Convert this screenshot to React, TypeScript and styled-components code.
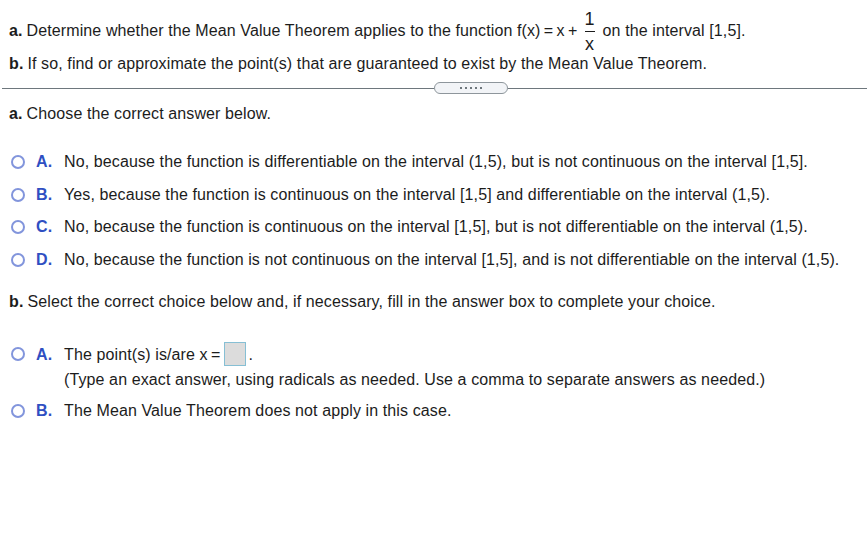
import React from "react";
import styled, { createGlobalStyle } from "styled-components";

const Global = createGlobalStyle`
  html, body { margin: 0; padding: 0; background: #fff; }
  body { font-family: "Liberation Sans", Arial, sans-serif; font-size: 16px; letter-spacing: 0.11px; color: #1c1c1c; }
`;

const Page = styled.div`
  width: 867px;
  height: 542px;
  overflow: hidden;
  padding: 9px 0 0 9px;
  box-sizing: border-box;
`;

const QLine = styled.div<{ h: number }>`
  display: flex;
  align-items: center;
  height: ${(p) => p.h}px;
  white-space: pre;
`;

const Bold = styled.b`
  font-weight: bold;
  margin-right: 4px;
`;

const Frac = styled.span`
  display: inline-flex;
  flex-direction: column;
  align-items: center;
  margin: 0 8px 0 7px;
  font-size: 18px;
  line-height: 16px;
`;

const FracBar = styled.span`
  display: block;
  width: 10px;
  height: 1px;
  background: #1c1c1c;
  margin: 4px 0 4px;
`;

const Divider = styled.div`
  display: flex;
  align-items: center;
  margin: 7px 0 0 -7px;
  height: 12px;
`;

const Rule = styled.div<{ grow: number }>`
  flex: ${(p) => p.grow};
  height: 1px;
  background: #6e777d;
`;

const Pill = styled.div`
  width: 72px;
  height: 10px;
  border: 1px solid #8e969c;
  border-radius: 6px;
  background: #f2f4f7;
  display: flex;
  align-items: center;
  justify-content: center;
  gap: 3px;
`;

const Dot = styled.span`
  width: 2px;
  height: 2px;
  background: #6e777d;
`;

const Prompt = styled.div<{ top: number }>`
  margin-top: ${(p) => p.top}px;
  height: 20px;
  display: flex;
  align-items: center;
  white-space: nowrap;
`;

const Options = styled.div<{ top: number; gap: number }>`
  display: flex;
  flex-direction: column;
  margin-top: ${(p) => p.top}px;
  gap: ${(p) => p.gap}px;
`;

const Option = styled.div`
  display: grid;
  grid-template-columns: 25px 28px 1fr;
  align-items: start;
  margin-left: 2px;
`;

const Radio = styled.span<{ dy?: number }>`
  width: 14px;
  height: 14px;
  border: 2px solid #8295dc;
  border-radius: 50%;
  box-sizing: border-box;
  margin-top: ${(p) => p.dy ?? 3}px;
`;

const Letter = styled.span`
  color: #2f4fc2;
  font-weight: bold;
  line-height: 20px;
`;

const Text = styled.div`
  line-height: 20px;
  white-space: nowrap;
`;

const Sub = styled.div`
  line-height: 20px;
  margin-top: 4px;
  white-space: nowrap;
`;

const AnswerBox = styled.span`
  display: inline-block;
  width: 20px;
  height: 22px;
  background: #dcdcdc;
  border: 1px solid #86bfd4;
  vertical-align: middle;
  margin: -4px 2px 0 4px;
`;

const partA = [
  ["A.", "No, because the function is differentiable on the interval (1,5), but is not continuous on the interval [1,5]."],
  ["B.", "Yes, because the function is continuous on the interval [1,5] and differentiable on the interval (1,5)."],
  ["C.", "No, because the function is continuous on the interval [1,5], but is not differentiable on the interval (1,5)."],
  ["D.", "No, because the function is not continuous on the interval [1,5], and is not differentiable on the interval (1,5)."],
];

export default function App() {
  return (
    <Page>
      <Global />
      <QLine h={44}>
        <Bold>a.</Bold>
        {"Determine whether the Mean Value Theorem applies to the function f(x)\u2009=\u2009x\u2009+"}
        <Frac>
          <span>1</span>
          <FracBar />
          <span>x</span>
        </Frac>
        {"on the interval [1,5]."}
      </QLine>
      <QLine h={22}>
        <Bold>b.</Bold>
        If so, find or approximate the point(s) that are guaranteed to exist by the Mean Value Theorem.
      </QLine>
      <Divider>
        <Rule grow={430} />
        <Pill>
          <Dot /><Dot /><Dot /><Dot /><Dot />
        </Pill>
        <Rule grow={357} />
      </Divider>
      <Prompt top={10}>
        <Bold>a.</Bold>
        Choose the correct answer below.
      </Prompt>
      <Options top={28} gap={12.67}>
        {partA.map(([l, t]) => (
          <Option key={l}>
            <Radio />
            <Letter>{l}</Letter>
            <Text>{t}</Text>
          </Option>
        ))}
      </Options>
      <Prompt top={22}>
        <Bold>b.</Bold>
        Select the correct choice below and, if necessary, fill in the answer box to complete your choice.
      </Prompt>
      <Options top={33} gap={11}>
        <Option>
          <Radio dy={2} />
          <Letter>A.</Letter>
          <div>
            <Text>
              The point(s) is/are x&thinsp;=<AnswerBox />.
            </Text>
            <Sub>(Type an exact answer, using radicals as needed. Use a comma to separate answers as needed.)</Sub>
          </div>
        </Option>
        <Option>
          <Radio />
          <Letter>B.</Letter>
          <Text>The Mean Value Theorem does not apply in this case.</Text>
        </Option>
      </Options>
    </Page>
  );
}
